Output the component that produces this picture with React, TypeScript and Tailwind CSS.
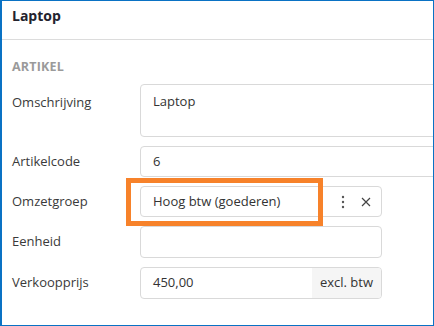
import React from "react";

const Row = ({ label, children, top = false }: { label: string; children: React.ReactNode; top?: boolean }) => (
  <div className={`flex ${top ? "items-start" : "items-center"}`}>
    <div className={`w-[128px] shrink-0 text-[13px] text-[#3a3a3a] ${top ? "pt-[9px]" : ""}`}>{label}</div>
    {children}
  </div>
);

const App = () => {
  return (
    <div
      className="relative w-[434px] h-[326px] overflow-hidden bg-white border border-l-2 border-[#0a72c4]"
      style={{ fontFamily: '"Open Sans", "Liberation Sans", sans-serif' }}
    >
      {/* Header */}
      <div className="h-[39px] border-b border-[#dcdcdc] px-[10px] pt-[5px]">
        <h1 className="text-[14px] font-bold text-[#23232e] leading-[20px]">Laptop</h1>
      </div>

      <div className="pl-[10px] pt-[17px]">
        <div className="text-[12.5px] font-bold text-[#9a9a9a] tracking-[0.2px] leading-[20px] mb-[7px]">ARTIKEL</div>

        <div className="flex flex-col gap-[9px]">
          <Row label="Omschrijving" top>
            <div className="w-[320px] h-[53px] shrink-0 border border-[#d9d9d9] rounded-[4px] px-[12px] pt-[7px] text-[13px] text-[#333]">
              Laptop
            </div>
          </Row>
          <Row label="Artikelcode">
            <div className="w-[320px] h-[31px] shrink-0 border border-[#d9d9d9] rounded-[4px] px-[12px] flex items-center text-[13px] text-[#333]">
              6
            </div>
          </Row>
          <Row label="Omzetgroep">
            <div className="w-[242px] h-[31px] shrink-0 border border-[#d9d9d9] rounded-[4px] pl-[12px] pr-[10px] flex items-center text-[13px] text-[#333]">
              <span className="flex-1">Hoog btw (goederen)</span>
              <svg width="4" height="14" viewBox="0 0 4 14" className="mr-[16px]">
                <circle cx="2" cy="2" r="1.2" fill="#555" />
                <circle cx="2" cy="7" r="1.2" fill="#555" />
                <circle cx="2" cy="12" r="1.2" fill="#555" />
              </svg>
              <svg width="10" height="10" viewBox="0 0 10 10">
                <path d="M1 1 L9 9 M9 1 L1 9" stroke="#444" strokeWidth="1.2" />
              </svg>
            </div>
          </Row>
          <Row label="Eenheid">
            <div className="w-[242px] h-[32px] shrink-0 border border-[#d9d9d9] rounded-[4px]" />
          </Row>
          <Row label="Verkoopprijs">
            <div className="w-[242px] h-[32px] shrink-0 border border-[#d9d9d9] rounded-[4px] flex overflow-hidden text-[13px] text-[#333]">
              <div className="flex-1 px-[12px] flex items-center">450,00</div>
              <div className="w-[69px] bg-[#f5f5f5] flex items-center justify-center">excl. btw</div>
            </div>
          </Row>
        </div>
      </div>

      {/* Annotation highlight */}
      <div className="absolute left-[124px] top-[177px] w-[197px] h-[48px] border-[5px] border-[#f7822a]" />
    </div>
  );
};

export default App;
